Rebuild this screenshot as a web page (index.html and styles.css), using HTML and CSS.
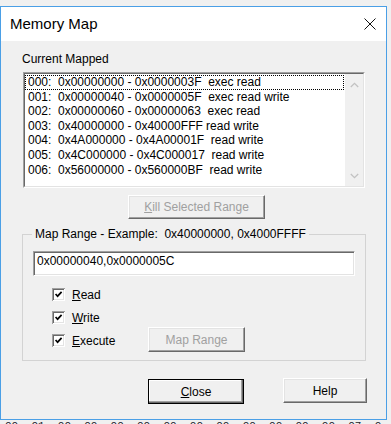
FILE: index.html
```html
<!DOCTYPE html>
<html>
<head>
<meta charset="utf-8">
<link rel="stylesheet" href="styles.css">
</head>
<body>
<div class="desk">
  <div class="window">
    <div class="titlebar">
      <span class="title">Memory Map</span>
      <svg class="close-x" width="12" height="12" viewBox="0 0 12 12"><path d="M0.5 0.5 L11.5 11.5 M11.5 0.5 L0.5 11.5" stroke="#111" stroke-width="1" fill="none"/></svg>
    </div>
    <div class="client">
      <div class="label">Current Mapped</div>
      <div class="list">
        <div class="list-inner">
          <div class="items">
            <div class="row focus">000:  0x00000000 - 0x0000003F  exec read</div>
            <div class="row">001:  0x00000040 - 0x0000005F  exec read write</div>
            <div class="row">002:  0x00000060 - 0x00000063  exec read</div>
            <div class="row">003:  0x40000000 - 0x40000FFF read write</div>
            <div class="row">004:  0x4A000000 - 0x4A00001F  read write</div>
            <div class="row">005:  0x4C000000 - 0x4C000017  read write</div>
            <div class="row">006:  0x56000000 - 0x560000BF  read write</div>
          </div>
          <div class="vscroll">
            <div class="arrow"><svg width="9" height="6" viewBox="0 0 9 6"><polyline points="0.8,5 4.5,1.3 8.2,5" fill="none" stroke="#c2c2c2" stroke-width="1.3"/></svg></div>
            <div class="arrow"><svg width="9" height="6" viewBox="0 0 9 6"><polyline points="0.8,1 4.5,4.7 8.2,1" fill="none" stroke="#c2c2c2" stroke-width="1.3"/></svg></div>
          </div>
        </div>
      </div>
      <div class="btn btn-kill disabled"><span><u>K</u>ill Selected Range</span></div>
      <fieldset class="group">
        <legend>Map Range - Example:&nbsp; 0x40000000, 0x4000FFFF</legend>
        <div class="group-body">
          <div class="edit">0x00000040,0x0000005C</div>
          <div class="checks">
            <div class="check">
              <div class="cb-wrap">
                <svg class="cb" width="13" height="13" viewBox="0 0 13 13"><rect x="0" y="0" width="13" height="13" fill="#a0a0a0"/><rect x="1" y="1" width="12" height="12" fill="#fff"/><rect x="1" y="1" width="11" height="11" fill="#696969"/><rect x="2" y="2" width="10" height="10" fill="#e3e3e3"/><rect x="2" y="2" width="9" height="9" fill="#fff"/><polyline points="3.6,6 5.6,8.2 9.6,3.9" fill="none" stroke="#000" stroke-width="1.7"/></svg>
                <span><u>R</u>ead</span>
              </div>
            </div>
            <div class="check">
              <div class="cb-wrap">
                <svg class="cb" width="13" height="13" viewBox="0 0 13 13"><rect x="0" y="0" width="13" height="13" fill="#a0a0a0"/><rect x="1" y="1" width="12" height="12" fill="#fff"/><rect x="1" y="1" width="11" height="11" fill="#696969"/><rect x="2" y="2" width="10" height="10" fill="#e3e3e3"/><rect x="2" y="2" width="9" height="9" fill="#fff"/><polyline points="3.6,6 5.6,8.2 9.6,3.9" fill="none" stroke="#000" stroke-width="1.7"/></svg>
                <span><u>W</u>rite</span>
              </div>
            </div>
            <div class="check">
              <div class="cb-wrap">
                <svg class="cb" width="13" height="13" viewBox="0 0 13 13"><rect x="0" y="0" width="13" height="13" fill="#a0a0a0"/><rect x="1" y="1" width="12" height="12" fill="#fff"/><rect x="1" y="1" width="11" height="11" fill="#696969"/><rect x="2" y="2" width="10" height="10" fill="#e3e3e3"/><rect x="2" y="2" width="9" height="9" fill="#fff"/><polyline points="3.6,6 5.6,8.2 9.6,3.9" fill="none" stroke="#000" stroke-width="1.7"/></svg>
                <span><u>E</u>xecute</span>
              </div>
              <div class="btn btn-map disabled"><span>Map Range</span></div>
            </div>
          </div>
        </div>
      </fieldset>
      <div class="actions">
        <div class="btn btn-close default"><span><u>C</u>lose</span></div>
        <div class="btn btn-help"><span>Help</span></div>
      </div>
    </div>
  </div>
  <div class="dump">00  01  00  00  00  00  00  00  00  00  00  00  00  07  0</div>
</div>
</body>
</html>
```
FILE: styles.css
```css
* { box-sizing: border-box; }
html, body { margin: 0; padding: 0; }
body {
  width: 391px;
  height: 424px;
  overflow: hidden;
  background: #f0f0f0;
  font-family: "Liberation Sans", Arial, sans-serif;
  font-size: 12px;
  color: #000;
}
.desk { padding-top: 6px; }
.window {
  width: 387px;
  border: 1px solid #4a9fe6;
  background: #f0f0f0;
}
.titlebar {
  height: 34px;
  background: #fff;
  display: flex;
  align-items: center;
  justify-content: space-between;
  padding: 0 10px 0 9px;
}
.title { font-size: 15px; line-height: 34px; }
.close-x { display: block; }
.client {
  height: 378px;
  padding: 11px 0 0 21px;
}
.label { height: 14px; line-height: 14px; }
.list {
  margin: 6px 0 0 1px;
  width: 342px;
  height: 116px;
  border: 1px solid;
  border-color: #a0a0a0 #fff #fff #a0a0a0;
}
.list-inner {
  height: 100%;
  display: flex;
  border: 1px solid;
  border-color: #696969 #e3e3e3 #e3e3e3 #696969;
}
.items {
  flex: 1;
  background: #fff;
  padding-top: 1px;
}
.row {
  height: 14.6px;
  line-height: 12.6px;
  border: 1px solid transparent;
  margin-right: 1px;
  padding-left: 2px;
  white-space: pre;
}
.row.focus { border: 1px dotted #000; }
.vscroll {
  width: 18px;
  background: #f0f0f0;
  display: flex;
  flex-direction: column;
  justify-content: space-between;
}
.arrow {
  height: 21px;
  display: flex;
  align-items: center;
  justify-content: center;
}
.arrow svg { display: block; }
.btn {
  display: flex;
  align-items: center;
  justify-content: center;
  background: #f0f0f0;
  border: 1px solid;
  border-color: #fff #696969 #696969 #fff;
  box-shadow: inset -1px -1px 0 #a0a0a0, inset 1px 1px 0 #e3e3e3;
  white-space: pre;
}
.btn.disabled { color: #a0a0a0; }
.btn.default {
  border: 1px solid #000;
  box-shadow: inset -1px -1px 0 #696969, inset -2px -2px 0 #a0a0a0, inset 1px 1px 0 #fff;
}
.btn-kill {
  margin: 7px 0 0 106px;
  width: 137px;
  height: 24px;
}
.group {
  margin: 8px 0 0 0;
  padding: 0;
  width: 344px;
  min-width: 0;
  border: 1px solid #d3d3d3;
}
.group legend {
  margin-left: 9px;
  padding: 0 3px;
  line-height: 14px;
  white-space: pre;
}
.group-body { padding: 10px 0 8px 10px; }
.edit {
  width: 322px;
  height: 25px;
  background: #fff;
  border: 1px solid;
  border-color: #a0a0a0 #fff #fff #a0a0a0;
  box-shadow: inset 1px 1px 0 #696969, inset -1px -1px 0 #e3e3e3;
  padding-left: 3px;
  line-height: 19px;
  white-space: pre;
}
.checks { margin-top: 7px; padding-left: 19px; }
.check {
  height: 23px;
  display: grid;
  grid-template-columns: 96px auto;
  align-items: center;
}
.cb-wrap {
  display: flex;
  align-items: center;
  gap: 7px;
}
.cb { display: block; }
.btn-map {
  width: 97px;
  height: 25px;
  align-self: start;
  margin-top: -2px;
}
.actions {
  display: flex;
  align-items: flex-start;
  margin-top: 18px;
  padding-left: 126px;
  gap: 39px;
}
.btn-close { width: 96px; height: 25px; }
.btn-help { width: 84px; height: 25px; margin-top: -1px; }
.dump {
  width: 391px;
  overflow: hidden;
  padding-left: 5px;
  font-family: "Liberation Mono", "Courier New", monospace;
  font-size: 11px;
  line-height: 12px;
  white-space: pre;
  color: #1a1a2a;
}
```
